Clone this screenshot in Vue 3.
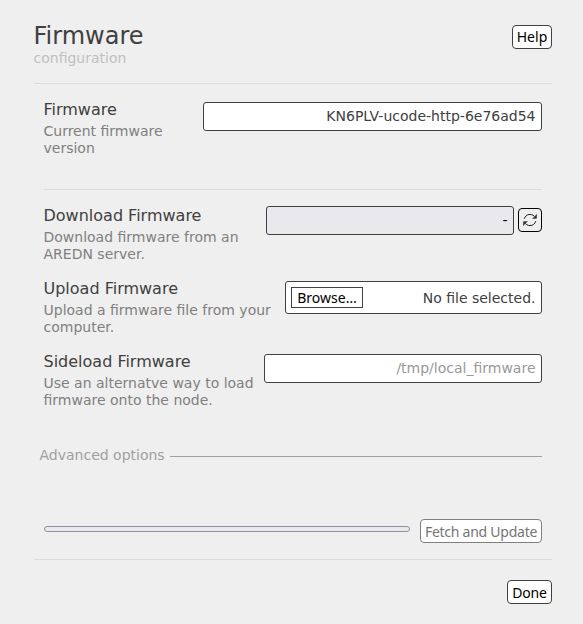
<script setup>
import { ref } from 'vue'

const version = ref('KN6PLV-ucode-http-6e76ad54')
const sideload = ref('')
</script>

<template>
  <main class="dialog">
    <header class="head">
      <div>
        <h1>Firmware</h1>
        <p class="sub">configuration</p>
      </div>
      <button class="btn help">Help</button>
    </header>
    <hr class="rule" />
    <section class="body">
      <div class="row">
        <div class="label">
          <h2>Firmware</h2>
          <p>Current firmware<br />version</p>
        </div>
        <input v-model="version" class="field current" type="text" readonly />
      </div>
      <hr class="rule inner" />
      <div class="row">
        <div class="label">
          <h2>Download Firmware</h2>
          <p>Download firmware from an<br />AREDN server.</p>
        </div>
        <div class="picker">
          <div class="field select">-</div>
          <button class="btn refresh" aria-label="Refresh">
            <svg width="16" height="16" viewBox="0 0 16 16" fill="none" stroke="#222" stroke-width="1">
              <path d="M2.300 6.800C2.900 4.200 5.200 2.400 8 2.400c2.200 0 4.200 1.200 5.300 3" />
              <path d="M14.400 2.500v3.800h-3.800l2.500-1z" fill="#222" stroke-width=".6" />
              <path d="M13.700 9.200c-.6 2.600-2.900 4.400-5.700 4.400-2.200 0-4.200-1.200-5.300-3" />
              <path d="M1.600 13.500V9.700h3.800l-2.500 1z" fill="#222" stroke-width=".6" />
            </svg>
          </button>
        </div>
      </div>
      <div class="row">
        <div class="label">
          <h2>Upload Firmware</h2>
          <p>Upload a firmware file from your<br />computer.</p>
        </div>
        <div class="field file">
          <button class="browse">Browse…</button>
          <span class="filename">No file selected.</span>
        </div>
      </div>
      <div class="row">
        <div class="label">
          <h2>Sideload Firmware</h2>
          <p>Use an alternatve way to load<br />firmware onto the node.</p>
        </div>
        <input v-model="sideload" class="field side" type="text" placeholder="/tmp/local_firmware" />
      </div>
      <div class="advanced"><span>Advanced options</span></div>
      <div class="action">
        <div class="progress"></div>
        <button class="btn fetch" disabled>Fetch and Update</button>
      </div>
    </section>
    <hr class="rule" />
    <footer class="foot">
      <button class="btn done">Done</button>
    </footer>
  </main>
</template>

<style>
body {
  margin: 0;
  background: #efefef;
}
</style>

<style scoped>
* {
  box-sizing: border-box;
}
.dialog {
  height: 624px;
  padding: 22px 31px 0 33.5px;
  background: #efefef;
  color: #404040;
  font: 14px/17px "DejaVu Sans", sans-serif;
}
h1, h2, p {
  margin: 0;
  font-weight: 400;
  white-space: nowrap;
}
.head {
  display: flex;
  justify-content: space-between;
  height: 61px;
}
h1 {
  font-size: 24px;
  line-height: 28px;
}
.sub {
  color: #c0c0c0;
}
.rule {
  height: 1px;
  margin: 0;
  border: 0;
  background: #dcdcdc;
}
.body {
  height: 475px;
  padding: 16px 10px 0;
}
.row {
  display: flex;
  justify-content: space-between;
  align-items: flex-start;
  height: 57px;
  margin-bottom: 16px;
}
.inner {
  margin: 32px 0 16px;
}
.row:first-child {
  margin-bottom: 0;
}
h2 {
  margin-bottom: 4px;
  font-size: 16px;
  line-height: 19px;
}
.label p {
  color: #808080;
}
.field {
  height: 29px;
  margin: 2px 0 0;
  padding: 0 5.5px 2px;
  border: 1px solid #404040;
  border-radius: 3px;
  background: #fff;
  color: #404040;
  font: 14px/25px "DejaVu Sans", sans-serif;
  text-align: right;
  outline: none;
}
.field::placeholder {
  color: #999;
  opacity: 1;
}
.current {
  width: 339px;
}
.side {
  width: 278px;
}
.picker {
  display: flex;
  gap: 4px;
}
.select {
  width: 248px;
  margin-top: 0;
  padding-top: 1px;
  background: #e9e9ed;
  color: #000;
}
.file {
  display: flex;
  align-items: center;
  justify-content: space-between;
  width: 257px;
  height: 33px;
  padding: 0 5.5px 0 5px;
}
.filename {
  padding-top: 2px;
}
.browse {
  width: 72px;
  height: 21px;
  padding: 0;
  border: 1px solid #404040;
  background: #fff;
  color: #000;
  font: 14px/19px "Noto Sans", sans-serif;
}
.btn {
  flex: none;
  height: 24px;
  padding: 0;
  border: 1px solid #404040;
  border-radius: 4px;
  background: #fff;
  color: #000;
  font: 14px/22px "Noto Sans", sans-serif;
}
.help {
  width: 40px;
  margin-top: 3px;
}
.refresh {
  display: flex;
  align-items: center;
  justify-content: center;
  width: 24px;
  margin-top: 2px;
  border-color: #000;
  background: #efefef;
}
.advanced {
  display: flex;
  gap: 5px;
  margin: 38px 0 0 -4px;
  color: #a0a0a0;
}
.advanced::after {
  content: "";
  flex: 1;
  height: 1px;
  margin-top: 9px;
  background: #a0a0a0;
}
.action {
  display: flex;
  gap: 10px;
  margin-top: 55px;
}
.progress {
  flex: 1;
  height: 6px;
  margin-top: 7px;
  border: 1px solid #8f8f9d;
  border-radius: 3px;
  background: #e9e9ed;
}
.fetch {
  width: 122px;
  padding-top: 1px;
  border-color: #808080;
  color: #757575;
  letter-spacing: -0.25px;
}
.foot {
  display: flex;
  justify-content: flex-end;
  padding-top: 20px;
}
.done {
  width: 45px;
  padding-top: 1px;
  letter-spacing: -0.15px;
}
</style>
